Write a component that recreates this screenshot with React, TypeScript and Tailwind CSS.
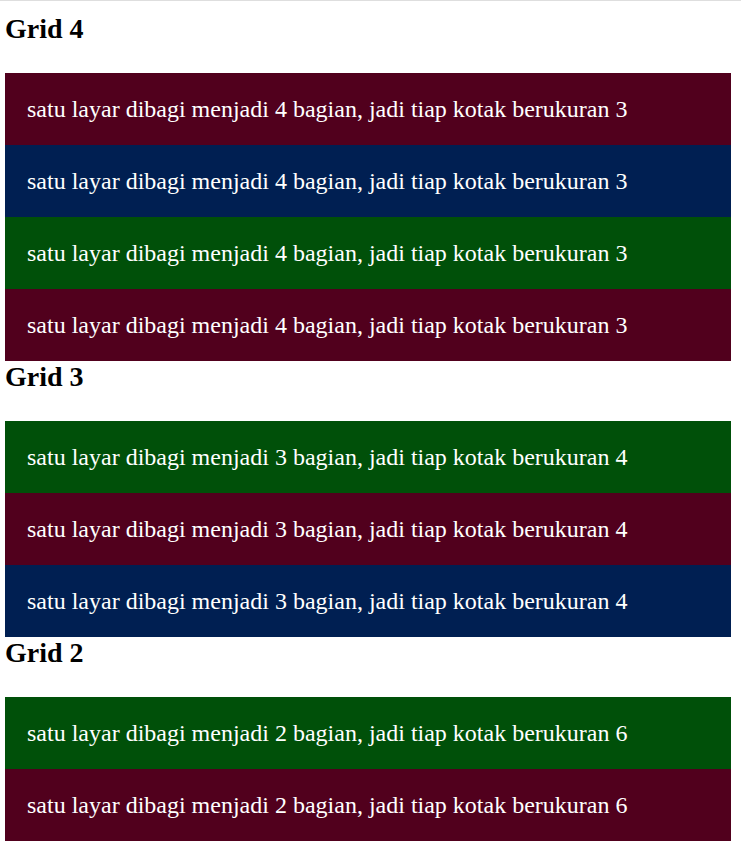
import React from "react";

const MAROON = "bg-[#51001d]";
const NAVY = "bg-[#001f52]";
const GREEN = "bg-[#005009]";

type Section = {
  title: string;
  text: string;
  colors: string[];
};

const sections: Section[] = [
  {
    title: "Grid 4",
    text: "satu layar dibagi menjadi 4 bagian, jadi tiap kotak berukuran 3",
    colors: [MAROON, NAVY, GREEN, MAROON],
  },
  {
    title: "Grid 3",
    text: "satu layar dibagi menjadi 3 bagian, jadi tiap kotak berukuran 4",
    colors: [GREEN, MAROON, NAVY],
  },
  {
    title: "Grid 2",
    text: "satu layar dibagi menjadi 2 bagian, jadi tiap kotak berukuran 6",
    colors: [GREEN, MAROON],
  },
];

export default function App() {
  return (
    <div
      className="min-h-[849px] bg-white border-t border-[#dedede] pt-[12px] pl-[5px] pr-[10px] text-black"
      style={{ fontFamily: '"Liberation Serif", "Times New Roman", serif' }}
    >
      {sections.map((s) => (
        <section key={s.title}>
          <h2 className="text-[28px] font-bold leading-[32px] mb-[28px]">
            {s.title}
          </h2>
          <div className="flex flex-col">
            {s.colors.map((c, i) => (
              <div
                key={i}
                className={`${c} text-white text-[24px] leading-[28px] pl-[22px] pt-[22px] pb-[22px]`}
              >
                {s.text}
              </div>
            ))}
          </div>
        </section>
      ))}
    </div>
  );
}
